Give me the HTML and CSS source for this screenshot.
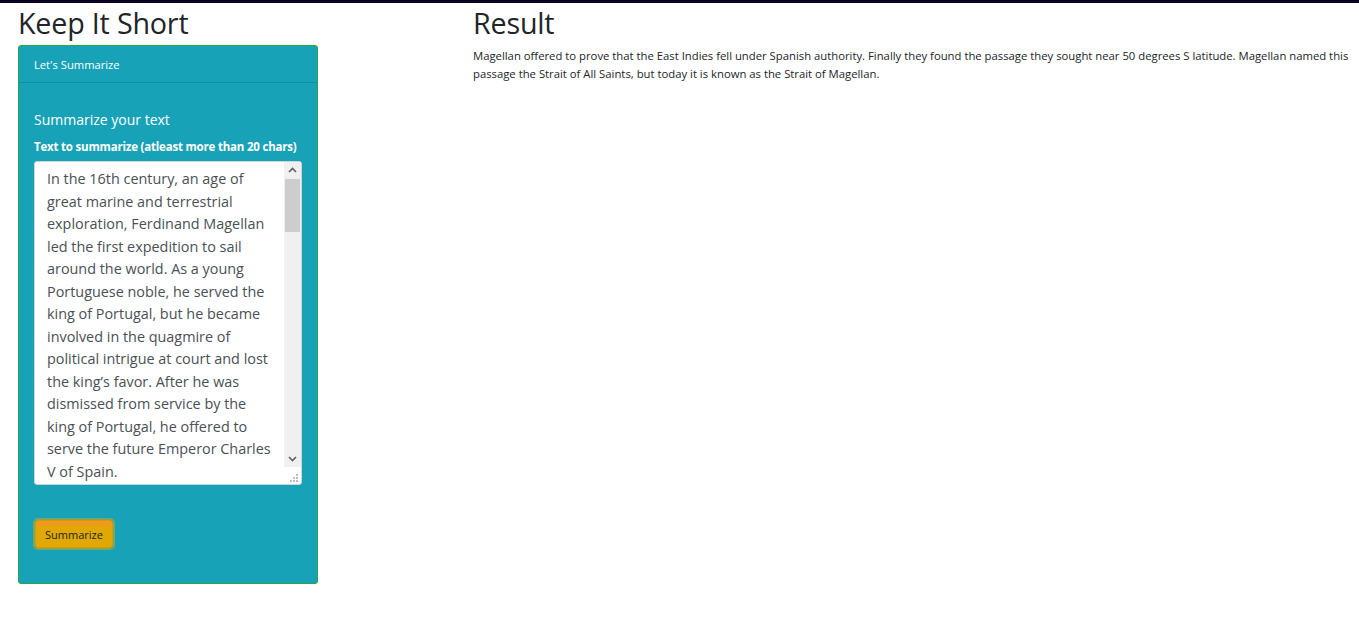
FILE: index.html
```html
<!DOCTYPE html>
<html>
<head>
<meta charset="utf-8">
<title>Keep It Short</title>
<link rel="stylesheet" href="styles.css">
</head>
<body>
<div class="page">
  <div class="col-left">
    <h1 class="title">Keep It Short</h1>
    <div class="card">
      <div class="card-header">Let's Summarize</div>
      <div class="card-body">
        <h5 class="card-title">Summarize your text</h5>
        <label class="label" for="txt">Text to summarize (atleast more than 20 chars)</label>
        <div class="field">
          <textarea id="txt" class="input" spellcheck="false">In the 16th century, an age of great marine and terrestrial exploration, Ferdinand Magellan led the first expedition to sail around the world. As a young Portuguese noble, he served the king of Portugal, but he became involved in the quagmire of political intrigue at court and lost the king’s favor. After he was dismissed from service by the king of Portugal, he offered to serve the future Emperor Charles V of Spain.

A papal decree of 1493 had assigned all land in the New World west of 50 degrees W longitude to Spain and all the land east of that line to Portugal. Magellan offered to prove that the East Indies fell under Spanish authority. On September 20, 1519, Magellan set sail from Spain with five ships. More than a year later, one of these ships was exploring the topography of South America in search of a water route across the continent. This ship sank, but the remaining four ships searched along the southern peninsula of South America. Finally they found the passage they sought near 50 degrees S latitude. Magellan named this passage the Strait of All Saints, but today it is known as the Strait of Magellan.

One ship deserted while in this passage and returned to Spain, so fewer sailors were privileged to gaze at that first panorama of the Pacific Ocean. Those who remained crossed the meridian now known as the International Date Line in the early spring of 1521 after 98 days on the Pacific Ocean. During those long days at sea, many of Magellan’s men died of starvation and disease.</textarea>
          <div class="scrollbar" aria-hidden="true">
            <div class="sb-btn">
              <svg width="17" height="17" viewBox="0 0 17 17"><path d="M5 10 L8.5 6.5 L12 10" fill="none" stroke="#606060" stroke-width="1.6"/></svg>
            </div>
            <div class="sb-track"><div class="sb-thumb"></div></div>
            <div class="sb-btn">
              <svg width="17" height="17" viewBox="0 0 17 17"><path d="M5 7 L8.5 10.5 L12 7" fill="none" stroke="#606060" stroke-width="1.6"/></svg>
            </div>
          </div>
          <svg class="grip" width="10" height="10" viewBox="0 0 10 10" aria-hidden="true">
            <rect x="7" y="1" width="2" height="2" fill="#bdbdbd"/>
            <rect x="4" y="4" width="2" height="2" fill="#bdbdbd"/>
            <rect x="7" y="4" width="2" height="2" fill="#bdbdbd"/>
            <rect x="1" y="7" width="2" height="2" fill="#bdbdbd"/>
            <rect x="4" y="7" width="2" height="2" fill="#bdbdbd"/>
            <rect x="7" y="7" width="2" height="2" fill="#bdbdbd"/>
          </svg>
        </div>
        <button class="btn" type="button">Summarize</button>
      </div>
    </div>
  </div>
  <div class="col-right">
    <h1 class="title">Result</h1>
    <p class="result">Magellan offered to prove that the East Indies fell under Spanish authority. Finally they found the passage they sought near 50 degrees S latitude. Magellan named this passage the Strait of All Saints, but today it is known as the Strait of Magellan.</p>
  </div>
</div>
</body>
</html>
```

FILE: styles.css
```css
html, body {
  margin: 0;
  padding: 0;
}
body {
  border-top: 3px solid #0b0322;
  font-family: "Open Sans", "Noto Sans", sans-serif;
  color: #212529;
  background: #fff;
}
.page {
  display: flex;
  padding: 0 8px 0 18px;
}
.col-left {
  width: 455px;
  flex: none;
}
.col-right {
  flex: 1;
}
.title {
  margin: 0;
  font-weight: 400;
  font-size: 28.7px;
  line-height: 39px;
  height: 42px;
  color: #212529;
  letter-spacing: -0.2px;
}
.card {
  width: 298px;
  height: 537px;
  background: #17a2b8;
  border: 1px solid #28a745;
  border-radius: 3px;
  display: flex;
  flex-direction: column;
}
.card-header {
  height: 36px;
  line-height: 37px;
  padding: 0 15px;
  font-size: 11.2px;
  color: #fff;
  border-bottom: 1px solid rgba(0, 0, 0, 0.125);
}
.card-body {
  padding: 26px 15px 0 15px;
  display: flex;
  flex-direction: column;
  align-items: flex-start;
}
.card-title {
  margin: 0;
  font-size: 14px;
  font-weight: 400;
  color: #fff;
  line-height: 22px;
}
.label {
  margin-top: 8px;
  font-size: 11.5px;
  font-weight: 700;
  color: #fff;
  line-height: 16px;
  letter-spacing: -0.2px;
}
.field {
  position: relative;
  margin-top: 6px;
  width: 268px;
  height: 324px;
}
.input {
  display: block;
  box-sizing: border-box;
  width: 268px;
  height: 324px;
  margin: 0;
  padding: 6px 29px 0 12px;
  border: 1px solid #ced4da;
  border-radius: 3px;
  font-family: "Open Sans", "Noto Sans", sans-serif;
  font-size: 14.4px;
  line-height: 22.5px;
  color: #495057;
  background: #fff;
  resize: none;
  overflow: hidden;
}
.scrollbar {
  position: absolute;
  top: 1px;
  right: 1px;
  width: 17px;
  height: 305px;
  display: flex;
  flex-direction: column;
  background: #f0f0f0;
}
.sb-btn {
  height: 17px;
  flex: none;
}
.sb-btn svg {
  display: block;
}
.sb-track {
  flex: 1;
}
.sb-thumb {
  height: 53px;
  margin: 0 1px;
  background: #cdcdcd;
}
.grip {
  position: absolute;
  right: 3px;
  bottom: 2px;
}
.btn {
  margin-top: 35px;
  margin-left: 1px;
  height: 28px;
  padding: 0 9px;
  font-family: "Open Sans", "Noto Sans", sans-serif;
  font-size: 11px;
  color: #212529;
  background: linear-gradient(#ee9a1f 0, #ee9a1f 5px, #e0a800 5px);
  border: 1px solid #d39e00;
  border-radius: 3px;
  box-shadow: 0 0 0 2px rgba(222, 170, 12, 0.5);
  cursor: pointer;
}
.result {
  margin: 2px 0 0 0;
  font-size: 11.3px;
  line-height: 18px;
  color: #212529;
}
```
